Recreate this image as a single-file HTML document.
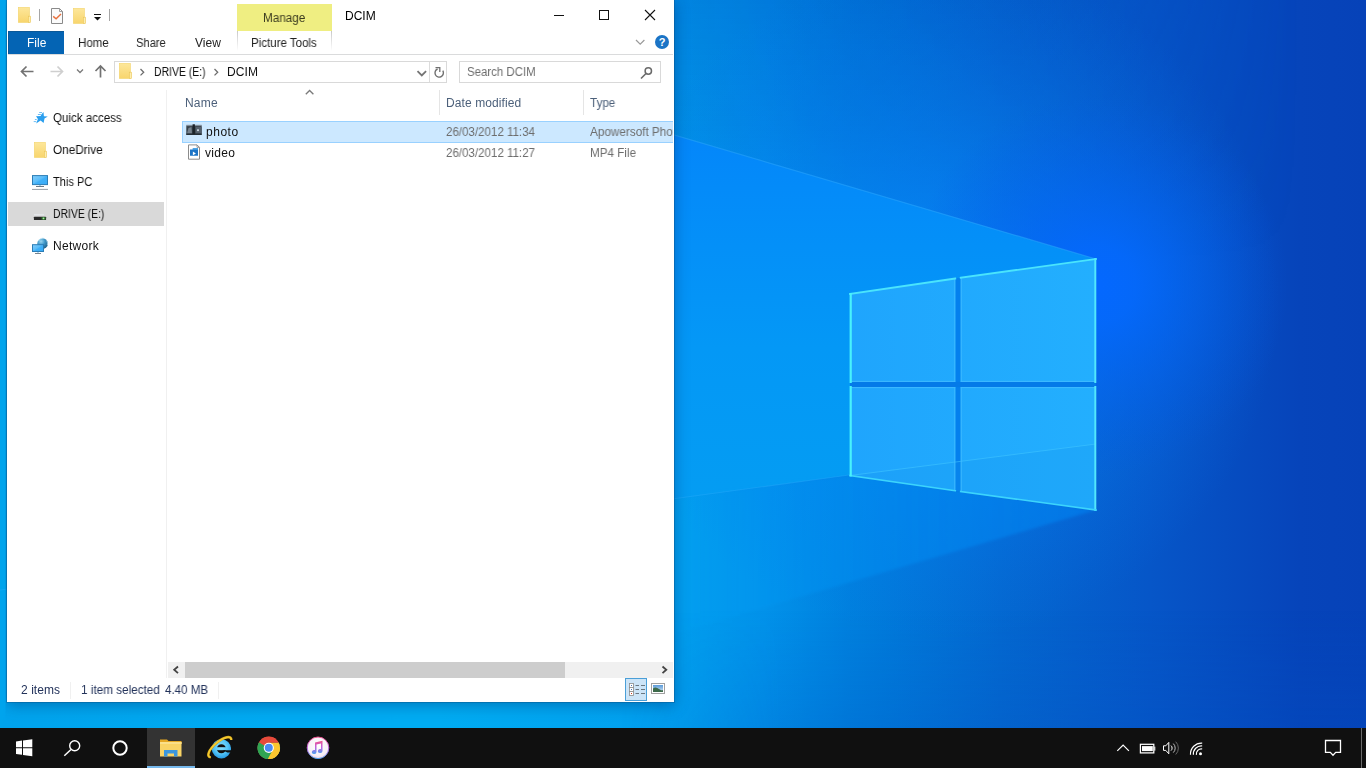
<!DOCTYPE html>
<html><head><meta charset="utf-8"><title>DCIM</title>
<style>
*{box-sizing:border-box;margin:0;padding:0}
html,body{width:1366px;height:768px;overflow:hidden;background:#0a5fd0;font-family:"Liberation Sans",sans-serif;font-size:12px;color:#000}
.a{position:absolute}
#wall{position:absolute;left:0;top:0;width:1366px;height:768px}
#win{position:absolute;left:7px;top:0;width:667px;height:702px;background:#fff;box-shadow:0 0 0 1px rgba(10,70,120,.32),0 3px 14px rgba(0,45,105,.42);clip-path:inset(0 -40px -40px -1.500px)}
#taskbar{position:absolute;left:0;top:728px;width:1366px;height:40px;background:#101010}
.t{position:absolute;white-space:nowrap;font-size:12px;will-change:transform}
svg{position:absolute;overflow:visible}
</style></head><body>
<svg id="wall" viewBox="0 0 1366 768">
<defs>
<linearGradient id="bg" x1="0" y1="0" x2="1366" y2="0" gradientUnits="userSpaceOnUse">
<stop offset="0" stop-color="#00a4ec"/><stop offset=".2" stop-color="#00acf2"/><stop offset=".32" stop-color="#00acf2"/><stop offset=".5" stop-color="#029eee"/><stop offset=".56" stop-color="#0292ea"/><stop offset=".622" stop-color="#0080de"/><stop offset=".732" stop-color="#0468d0"/><stop offset=".842" stop-color="#0656c8"/><stop offset=".952" stop-color="#0644ba"/><stop offset="1" stop-color="#0642b8"/>
</linearGradient>
<linearGradient id="vd" x1="0" y1="0" x2="0" y2="260" gradientUnits="userSpaceOnUse">
<stop offset="0" stop-color="#0030b0" stop-opacity=".24"/><stop offset=".5" stop-color="#0030b0" stop-opacity=".14"/><stop offset="1" stop-color="#0030b0" stop-opacity="0"/>
</linearGradient>
<linearGradient id="hm" x1="600" y1="0" x2="1300" y2="0" gradientUnits="userSpaceOnUse">
<stop offset="0" stop-color="#fff" stop-opacity="0"/><stop offset=".1" stop-color="#fff"/><stop offset=".6" stop-color="#fff" stop-opacity=".8"/><stop offset="1" stop-color="#fff" stop-opacity="0"/>
</linearGradient>
<mask id="mk"><rect width="1366" height="768" fill="url(#hm)"/></mask>
<linearGradient id="beam" x1="0" y1="130" x2="0" y2="520" gradientUnits="userSpaceOnUse">
<stop offset="0" stop-color="#0486fa"/><stop offset=".3" stop-color="#0490f8"/><stop offset=".56" stop-color="#0498f6"/><stop offset="1" stop-color="#049df2"/>
</linearGradient>
<linearGradient id="floor" x1="674" y1="0" x2="1096" y2="0" gradientUnits="userSpaceOnUse">
<stop offset="0" stop-color="#08a0f6" stop-opacity=".1"/><stop offset=".4" stop-color="#0a94f6" stop-opacity=".4"/><stop offset="1" stop-color="#0a84f4" stop-opacity=".55"/>
</linearGradient>
<radialGradient id="glow" cx="1098" cy="285" r="190" gradientUnits="userSpaceOnUse">
<stop offset="0" stop-color="#0468ff" stop-opacity="1"/><stop offset=".2" stop-color="#0468fc" stop-opacity=".9"/><stop offset=".55" stop-color="#0462f2" stop-opacity=".5"/><stop offset="1" stop-color="#0458e4" stop-opacity="0"/>
</radialGradient>
<radialGradient id="glow2" cx="940" cy="300" r="340" gradientUnits="userSpaceOnUse">
<stop offset="0" stop-color="#088aff" stop-opacity=".85"/><stop offset=".45" stop-color="#0884fa" stop-opacity=".45"/><stop offset="1" stop-color="#0878f0" stop-opacity="0"/>
</radialGradient>
<linearGradient id="pane" x1="849" y1="0" x2="1096" y2="0" gradientUnits="userSpaceOnUse">
<stop offset="0" stop-color="#1fa5fd"/><stop offset="1" stop-color="#23affe"/>
</linearGradient>
<linearGradient id="edge" x1="849" y1="0" x2="1096" y2="0" gradientUnits="userSpaceOnUse">
<stop offset="0" stop-color="#3fe6f2"/><stop offset="1" stop-color="#5fe0f6"/>
</linearGradient>
<linearGradient id="bd" x1="0" y1="610" x2="0" y2="728" gradientUnits="userSpaceOnUse"><stop offset="0" stop-color="#0050c0" stop-opacity="0"/><stop offset="1" stop-color="#0050c0" stop-opacity=".2"/></linearGradient>
<linearGradient id="hm2" x1="620" y1="0" x2="780" y2="0" gradientUnits="userSpaceOnUse"><stop offset="0" stop-color="#fff" stop-opacity="0"/><stop offset="1" stop-color="#fff"/></linearGradient>
<mask id="mk2"><rect width="1366" height="768" fill="url(#hm2)"/></mask>
<filter id="bl" x="-5%" y="-5%" width="110%" height="110%"><feGaussianBlur stdDeviation="1.6"/></filter>
</defs>
<rect width="1366" height="768" fill="url(#bg)"/>
<rect width="1366" height="260" fill="url(#vd)" mask="url(#mk)"/>
<rect x="0" y="610" width="1366" height="118" fill="url(#bd)" mask="url(#mk2)"/>
<circle cx="940" cy="300" r="340" fill="url(#glow2)"/>
<circle cx="1098" cy="285" r="190" fill="url(#glow)"/>
<polygon points="660,130.900 1096,259 1096,510 849,475 660,500.600" fill="url(#beam)"/>
<g filter="url(#bl)"><polygon points="0,590 849,475 1096,510 0,832" fill="url(#floor)"/></g>
<polyline points="0,-63 1096,259" fill="none" stroke="#2aa4fc" stroke-width="1.2" opacity=".55"/>
<polyline points="0,590 849,475" fill="none" stroke="#2aacfc" stroke-width="1.2" opacity=".4"/>
<rect x="955.300" y="278" width="5.400" height="213" fill="#0480ee"/>
<rect x="850" y="381.900" width="246" height="5.200" fill="#047ae8"/>
<g fill="url(#pane)">
<polygon points="850,294 955.300,278.500 955.300,381.900 850,381.900"/>
<polygon points="960.700,277.700 1096,259 1096,381.900 960.700,381.900"/>
<polygon points="850,387.100 955.300,387.100 955.300,490.700 850,475.500"/>
<polygon points="960.700,387.100 1096,387.100 1096,510 960.700,491.500"/>
</g>
<polygon points="850,475.500 1096,444 1096,510" fill="#1090ee" opacity=".22"/>
<polyline points="850,475.500 1096,444" fill="none" stroke="#40c4ff" stroke-width="1" opacity=".6"/>
<g fill="none" stroke="#46beff" stroke-width="1" opacity=".8">
<path d="M954.800 278.500V381.900M954.800 387.100V490.600M961.200 277.700V381.900M961.200 387.100V491.500"/>
<path d="M850 381.400H955.300M960.700 381.400H1096M850 387.600H955.300M960.700 387.600H1096"/>
</g>
<g fill="none" stroke-linecap="square">
<path d="M850 294L955.300 278.500M960.700 277.700L1096 259" stroke="#4ae4fc" stroke-width="1.800"/>
<path d="M1095.300 259V381.900M1095.300 387.100V510" stroke="#52e6fc" stroke-width="2"/>
<path d="M850 475.500L955.300 490.700M960.700 491.500L1096 510" stroke="#3cd4fc" stroke-width="1.600"/>
<path d="M850.700 294V381.900M850.700 387.100V475.500" stroke="#48f2fc" stroke-width="2.200"/>
</g>
</svg>

<div id="win">
<!-- title bar / QAT -->
<svg class="a" style="left:0;top:0" width="667" height="60" viewBox="7 0 667 60">
<defs>
<linearGradient id="fg" x1="0" y1="0" x2="0" y2="1"><stop offset="0" stop-color="#fde79b"/><stop offset="1" stop-color="#f8d56d"/></linearGradient>
<g id="fold"><rect x="0.25" y="0.25" width="11.3" height="15.3" fill="url(#fg)" stroke="#f1d267" stroke-width="0.5"/><rect x="10.4" y="9.2" width="2.2" height="6.35" fill="#fdeeb0" stroke="#ecc556" stroke-width="0.6"/></g>
</defs>
<use href="#fold" x="18" y="7"/>
<rect x="39" y="9" width="1" height="12" fill="#a6a6a6"/>
<path d="M51.5 8.5h8l3 3v12h-11z" fill="#fbfbfb" stroke="#8a8a8a" stroke-width="1"/>
<path d="M59.5 8.5v3h3" fill="none" stroke="#8a8a8a" stroke-width=".8"/>
<path d="M53.2 16.4L56.1 18.8 61 14.1" fill="none" stroke="#e8703c" stroke-width="1.4"/>
<use href="#fold" x="73" y="8"/>
<rect x="94" y="14" width="7" height="1" fill="#111"/>
<path d="M94 17h7l-3.5 3.5z" fill="#111"/>
<rect x="109" y="9" width="1" height="12" fill="#a6a6a6"/>
<!-- Manage tab -->
<rect x="237" y="4" width="95" height="27" fill="#efee82"/>
<!-- Picture tools tab side borders -->
<linearGradient id="pb" x1="0" y1="0" x2="0" y2="1"><stop offset="0" stop-color="#c8c8c8"/><stop offset="1" stop-color="#c8c8c8" stop-opacity="0"/></linearGradient>
<rect x="237" y="31" width="1" height="20" fill="url(#pb)"/>
<rect x="331" y="31" width="1" height="20" fill="url(#pb)"/>
<!-- window controls -->
<rect x="554" y="15" width="10" height="1" fill="#111"/>
<rect x="599.5" y="10.5" width="9" height="9" fill="none" stroke="#111" stroke-width="1"/>
<path d="M645 10l10 10M655 10l-10 10" stroke="#111" stroke-width="1.1" fill="none"/>
<!-- File tab -->
<rect x="8" y="31" width="56" height="23" fill="#0464b4"/><path d="M8.5 54V31.500H64" fill="none" stroke="#0a5898" stroke-width="1"/>
<!-- ribbon bottom line -->
<rect x="8" y="54" width="665" height="1" fill="#dadbdc"/>
<!-- chevron + help -->
<path d="M636 40l4.2 4.2 4.2-4.2" fill="none" stroke="#9a9a9a" stroke-width="1.2"/>
<circle cx="662" cy="42" r="7" fill="#1b74c6"/>
<text x="662" y="46.2" font-family="Liberation Sans" font-weight="bold" font-size="11" fill="#fff" text-anchor="middle">?</text>
</svg>
<!-- address row -->
<svg class="a" style="left:0;top:56px" width="667" height="32" viewBox="7 56 667 32">
<g fill="none" stroke="#727272" stroke-width="1.7">
<path d="M33.5 71.500h-12M26.5 66.500l-5 5 5 5"/>
<path d="M100.500 77.500v-11M95.500 71.000l5-5 5 5"/>
</g>
<g fill="none" stroke="#cfcfcf" stroke-width="1.7"><path d="M50.5 71.5h12M57.5 66.5l5 5-5 5"/></g>
<path d="M77 69.500l3 3 3-3" fill="none" stroke="#7a7a7a" stroke-width="1.3"/>
<rect x="114.500" y="61.500" width="332" height="21" fill="#fff" stroke="#d9d9d9"/>
<use href="#fold" x="119" y="63"/>
<path d="M140.500 69l3.200 3.200-3.200 3.200M214.500 69l3.200 3.200-3.200 3.200" fill="none" stroke="#6e6e6e" stroke-width="1.3"/>
<path d="M417.5 71.2l4.3 4.2 4.3-4.2" fill="none" stroke="#747474" stroke-width="1.8"/>
<rect x="429" y="62" width="1" height="20" fill="#dcdcdc"/>
<path d="M442.800 70.700A4.200 4.200 0 1 1 437.600 69" fill="none" stroke="#707070" stroke-width="1.400"/>
<path d="M435.500 67.700H439.800V71.900" fill="none" stroke="#707070" stroke-width="1.300"/>
<rect x="459.500" y="61.500" width="201" height="21" fill="#fff" stroke="#d9d9d9"/>
<circle cx="648.300" cy="71" r="3.200" fill="none" stroke="#6a6a6a" stroke-width="1.5"/>
<path d="M646 73.500l-5 5" stroke="#6a6a6a" stroke-width="1.6" fill="none"/>
</svg>
<!-- nav pane -->
<div class="a" style="left:1px;top:202px;width:156px;height:24px;background:#d9d9d9"></div>
<div class="a" style="left:159px;top:90px;width:1px;height:588px;background:#f0f0f0"></div>
<svg class="a" style="left:0;top:100px" width="170" height="170" viewBox="7 100 170 170">
<!-- quick access star -->
<path d="M43.5 112L43.9 116.300 47.800 116.450 44.500 118.600 43.600 123.050 40.600 120.600 36.150 123.500 37.900 118.900 36 116.300 40.600 116 41.500 114.300z" fill="#2b9fee"/>
<path d="M39.200 112.500h2.800M37.900 114.500h3M34.900 119.500h1.800M33.700 121.600h2.600" stroke="#4aaef2" stroke-width=".8" fill="none"/>
<!-- onedrive folder -->
<use href="#fold" x="34" y="142"/>
<!-- this pc -->
<defs><linearGradient id="scr" x1="0" y1="0" x2="1" y2="1"><stop offset="0" stop-color="#86cffb"/><stop offset=".45" stop-color="#5cbdf9"/><stop offset=".55" stop-color="#3fb0f8"/><stop offset="1" stop-color="#3aaaf6"/></linearGradient>
<radialGradient id="glb" cx=".35" cy=".3" r=".8"><stop offset="0" stop-color="#9ad6f0"/><stop offset=".45" stop-color="#3f97c8"/><stop offset="1" stop-color="#1f5a80"/></radialGradient></defs>
<rect x="32.500" y="175.600" width="15" height="9" fill="url(#scr)" stroke="#2b7db6" stroke-width="1"/>
<rect x="39" y="185" width="2" height="1" fill="#9fd0ee"/>
<rect x="36" y="186.100" width="8" height=".9" fill="#5a6a78"/>
<rect x="32" y="188.900" width="16" height="1" fill="#98a0a8"/>
<!-- drive -->
<rect x="34" y="214" width="10" height="1.500" fill="#e6e9ec" opacity=".8"/>
<rect x="33.900" y="216.700" width="12.200" height="3.400" rx=".6" fill="#2a2a2a"/>
<rect x="41.500" y="217" width="4" height="2.800" fill="#2f7a2f" opacity=".8"/>
<circle cx="43.500" cy="218.400" r=".9" fill="#a8f0a0"/>
<!-- network -->
<circle cx="42.600" cy="243.500" r="5.300" fill="url(#glb)"/>
<path d="M38.500 241c1-2 3-3 5-3M46.500 240.500c1 1.500 1.300 3 .8 4.500" stroke="#c8ecfa" stroke-width=".9" fill="none" opacity=".8"/>
<rect x="32.500" y="244.700" width="11" height="6.800" fill="url(#scr)" stroke="#2b7db6" stroke-width="1"/>
<rect x="37.200" y="252" width="1.600" height="1" fill="#9fd0ee"/>
<rect x="35" y="253.100" width="6" height=".9" fill="#6a7884"/>
</svg>
<!-- header -->
<div class="a" style="left:432px;top:90px;width:1px;height:25px;background:#e5e5e5"></div>
<div class="a" style="left:576px;top:90px;width:1px;height:25px;background:#e5e5e5"></div>
<svg class="a" style="left:298px;top:89px" width="10" height="7" viewBox="305 89 10 7"><path d="M305.800 94.300l3.800-3.800 3.800 3.800" fill="none" stroke="#7a7a7a" stroke-width="1.300"/></svg>
<!-- rows -->
<div class="a" id="clip" style="left:160px;top:90px;width:506px;height:572px;overflow:hidden">
<div class="a" style="left:15px;top:31px;width:520px;height:22px;background:#cce8ff;border:1px solid #99d1ff"></div>
<div class="a" style="left:-160px;top:-90px;width:667px;height:702px">
<span class="t" id="t_ty1" style="left:582.70px;top:124.00px;color:#6d6d6d;font-size:12px;line-height:16px;transform:scaleX(0.978);transform-origin:0 0;">Apowersoft Photo Viewer</span>
</div>
</div>
<svg class="a" style="left:175px;top:120px" width="40" height="45" viewBox="182 120 40 45">
<defs><linearGradient id="ph" x1="0" y1="0" x2="1" y2="0"><stop offset="0" stop-color="#2a2f34"/><stop offset=".35" stop-color="#59626a"/><stop offset=".5" stop-color="#30363c"/><stop offset=".75" stop-color="#6a747c"/><stop offset="1" stop-color="#3a4046"/></linearGradient></defs>
<filter id="pbl" x="-10%" y="-20%" width="120%" height="140%"><feGaussianBlur stdDeviation="0.55"/></filter>
<g filter="url(#pbl)">
<rect x="186.3" y="125.4" width="15.4" height="9.4" fill="#36404a"/>
<rect x="186.3" y="124.6" width="15.4" height="1.6" fill="#8c98a4" opacity=".55"/>
<path d="M187 133.500l1.500-5.500 3-1 .5 6.500z" fill="#76828d"/>
<rect x="192.600" y="124.300" width="2.300" height="10" fill="#1d242a"/>
<rect x="195.600" y="127" width="6" height="6.500" fill="#55616c"/>
<rect x="197" y="129.300" width="2" height="1.800" fill="#c2ced8"/>
<rect x="186.300" y="133.600" width="15.400" height="1.300" fill="#222a31"/>
</g>
<path d="M188.500 144.900h8.500l2.500 2.500v11.800h-11z" fill="#fff" stroke="#8c8c8c" stroke-width="1"/>
<path d="M197 144.900v2.500h2.500" fill="none" stroke="#8c8c8c" stroke-width=".8"/>
<path d="M190 149.500h2.800v-1.200h5.200v7.500h-8z" fill="#1c74c6"/>
<rect x="192.800" y="148.300" width="5.200" height="1.400" fill="#4aa8ec"/>
<path d="M192.900 151.500l3 1.900-3 1.900z" fill="#fff"/>
</svg>
<!-- scrollbar -->
<div class="a" style="left:161px;top:662px;width:505px;height:16px;background:#f0f0f0"></div>
<div class="a" style="left:178px;top:662px;width:380px;height:16px;background:#cdcdcd"></div>
<svg class="a" style="left:161px;top:662px" width="505" height="16" viewBox="168 662 505 16">
<path d="M178 666.500l-3.800 3.300 3.800 3.300" fill="none" stroke="#444" stroke-width="1.800"/>
<path d="M662.500 666.500l3.800 3.300-3.800 3.300" fill="none" stroke="#444" stroke-width="1.800"/>
</svg>
<!-- status bar -->
<div class="a" style="left:63px;top:682px;width:1px;height:17px;background:#f0f0f0"></div>
<div class="a" style="left:211px;top:682px;width:1px;height:17px;background:#f0f0f0"></div>
<div class="a" style="left:618px;top:678px;width:22px;height:23px;background:#cce4f7;border:1px solid #4a9fd8"></div>
<svg class="a" style="left:618px;top:678px" width="49" height="24" viewBox="625 678 49 24">
<g fill="#fff" stroke="#8a8a8a" stroke-width=".8"><rect x="629.500" y="683.500" width="4" height="4"/><rect x="629.500" y="687.500" width="4" height="4"/><rect x="629.500" y="691.500" width="4" height="4"/></g>
<rect x="631" y="685" width="1" height="1" fill="#4a7ab8"/><rect x="631" y="689" width="1" height="1" fill="#4a7ab8"/><rect x="631" y="693" width="1" height="1" fill="#d04020"/>
<g fill="#6a7680"><rect x="635.500" y="685" width="3.500" height="1"/><rect x="641" y="685" width="4" height="1"/><rect x="635.500" y="689" width="3.500" height="1"/><rect x="641" y="689" width="4" height="1"/><rect x="635.500" y="693" width="3.500" height="1"/><rect x="641" y="693" width="4" height="1"/></g>
<rect x="651.500" y="683.500" width="13" height="10" fill="#fff" stroke="#a0a0a0" stroke-width="1"/>
<linearGradient id="sky" x1="0" y1="0" x2="0" y2="1"><stop offset="0" stop-color="#5a9ad8"/><stop offset="1" stop-color="#cfe4f4"/></linearGradient>
<rect x="653" y="685" width="10" height="7" fill="url(#sky)"/>
<path d="M653 692v-3.500c2-1.500 4-1 6 .5s3 1.500 4 1v2z" fill="#3d6a4a"/>
</svg>
<span class="t" id="t_manage" style="left:255.80px;top:10.00px;color:#3b3b20;font-size:12px;line-height:16px;transform:scaleX(0.9752);transform-origin:0 0;">Manage</span>
<span class="t" id="t_title" style="left:337.70px;top:8.00px;color:#000;font-size:12px;line-height:16px;transform:scaleX(0.9977);transform-origin:0 0;">DCIM</span>
<span class="t" id="t_file" style="left:19.50px;top:35.00px;color:#fff;font-size:12px;line-height:16px;letter-spacing:0.014px;">File</span>
<span class="t" id="t_home" style="left:70.60px;top:35.00px;color:#222;font-size:12px;line-height:16px;transform:scaleX(0.9620);transform-origin:0 0;">Home</span>
<span class="t" id="t_share" style="left:129.40px;top:35.00px;color:#222;font-size:12px;line-height:16px;transform:scaleX(0.9303);transform-origin:0 0;">Share</span>
<span class="t" id="t_view" style="left:187.60px;top:35.00px;color:#222;font-size:12px;line-height:16px;letter-spacing:0.051px;">View</span>
<span class="t" id="t_pt" style="left:243.60px;top:35.00px;color:#222;font-size:12px;line-height:16px;transform:scaleX(0.9593);transform-origin:0 0;">Picture Tools</span>
<span class="t" id="t_drive" style="left:146.60px;top:64.00px;color:#111;font-size:12px;line-height:16px;transform:scaleX(0.8695);transform-origin:0 0;">DRIVE (E:)</span>
<span class="t" id="t_dcim" style="left:220.40px;top:64.00px;color:#111;font-size:12px;line-height:16px;letter-spacing:0.107px;">DCIM</span>
<span class="t" id="t_search" style="left:460.40px;top:64.00px;color:#6d6d6d;font-size:12px;line-height:16px;transform:scaleX(0.9538);transform-origin:0 0;">Search DCIM</span>
<span class="t" id="t_qa" style="left:45.95px;top:110.00px;color:#111;font-size:12px;line-height:16px;transform:scaleX(0.9634);transform-origin:0 0;">Quick access</span>
<span class="t" id="t_od" style="left:45.95px;top:142.00px;color:#111;font-size:12px;line-height:16px;transform:scaleX(0.9815);transform-origin:0 0;">OneDrive</span>
<span class="t" id="t_pc" style="left:46.20px;top:174.00px;color:#111;font-size:12px;line-height:16px;transform:scaleX(0.9206);transform-origin:0 0;">This PC</span>
<span class="t" id="t_dr" style="left:45.60px;top:206.00px;color:#111;font-size:12px;line-height:16px;transform:scaleX(0.8661);transform-origin:0 0;">DRIVE (E:)</span>
<span class="t" id="t_nw" style="left:45.70px;top:238.00px;color:#111;font-size:12px;line-height:16px;letter-spacing:0.283px;">Network</span>
<span class="t" id="t_name" style="left:178.10px;top:95.00px;color:#4c607a;font-size:12px;line-height:16px;letter-spacing:0.196px;">Name</span>
<span class="t" id="t_date" style="left:438.90px;top:95.00px;color:#4c607a;font-size:12px;line-height:16px;letter-spacing:0.096px;">Date modified</span>
<span class="t" id="t_type" style="left:582.70px;top:95.00px;color:#4c607a;font-size:12px;line-height:16px;transform:scaleX(0.9725);transform-origin:0 0;">Type</span>
<span class="t" id="t_photo" style="left:198.70px;top:124.00px;color:#111;font-size:12px;line-height:16px;letter-spacing:0.514px;">photo</span>
<span class="t" id="t_video" style="left:198.30px;top:145.00px;color:#111;font-size:12px;line-height:16px;letter-spacing:0.282px;">video</span>
<span class="t" id="t_d1" style="left:438.70px;top:124.00px;color:#6d6d6d;font-size:12px;line-height:16px;transform:scaleX(0.9618);transform-origin:0 0;">26/03/2012 11:34</span>
<span class="t" id="t_d2" style="left:438.70px;top:145.00px;color:#6d6d6d;font-size:12px;line-height:16px;transform:scaleX(0.9618);transform-origin:0 0;">26/03/2012 11:27</span>
<span class="t" id="t_ty2" style="left:582.70px;top:145.00px;color:#6d6d6d;font-size:12px;line-height:16px;transform:scaleX(0.9716);transform-origin:0 0;">MP4 File</span>
<span class="t" id="t_items" style="left:14.40px;top:682.00px;color:#22325a;font-size:12px;line-height:16px;letter-spacing:0.059px;">2 items</span>
<span class="t" id="t_sel" style="left:73.90px;top:682.00px;color:#22325a;font-size:12px;line-height:16px;transform:scaleX(0.9775);transform-origin:0 0;">1 item selected</span>
<span class="t" id="t_size" style="left:158.10px;top:682.00px;color:#22325a;font-size:12px;line-height:16px;transform:scaleX(0.9619);transform-origin:0 0;">4.40 MB</span>

</div>
<div id="taskbar">
<div class="a" style="left:147px;top:0;width:48px;height:40px;background:#333"></div>
<div class="a" style="left:147px;top:38px;width:48px;height:2px;background:#76b9ed"></div>
<svg class="a" style="left:0;top:0" width="1366" height="40" viewBox="0 728 1366 40">
<!-- start -->
<g fill="#fff">
<path d="M16 741.500l6-.9v6.600h-6z"/><path d="M23 740.500l9.300-1.300v8h-9.300z"/>
<path d="M16 748.200h6v6.600l-6-.9z"/><path d="M23 748.200h9.300v8l-9.300-1.300z"/>
</g>
<!-- search -->
<circle cx="74.700" cy="745.800" r="5" fill="none" stroke="#fff" stroke-width="1.400"/>
<path d="M71 749.500l-6.700 6.300" stroke="#fff" stroke-width="1.500" fill="none"/>
<!-- cortana -->
<circle cx="120" cy="748" r="6.700" fill="none" stroke="#fff" stroke-width="2"/>
<!-- explorer -->
<path d="M160 739.500h7l1.500 1.500h13v3h-21.500z" fill="#e5a823"/>
<rect x="160" y="742" width="21.500" height="14.500" fill="#f9d466"/>
<rect x="160" y="742" width="21.500" height="2" fill="#fbe08a"/>
<path d="M164 756.500v-6.500h13.500v6.500h-3.500v-3h-6.500v3z" fill="#3b96dd"/>
<!-- IE -->
<g>
<defs><radialGradient id="ieg" cx="221" cy="747" r="11" gradientUnits="userSpaceOnUse"><stop offset="0" stop-color="#8adffc"/><stop offset=".6" stop-color="#55c6f7"/><stop offset="1" stop-color="#2a9fe6"/></radialGradient></defs>
<circle cx="221.400" cy="748.800" r="7.100" fill="none" stroke="url(#ieg)" stroke-width="5.100"/>
<rect x="214" y="747.200" width="16.500" height="3" fill="url(#ieg)"/>
<path d="M222.500 750.200h9.500v2.300h-4.600z" fill="#101010"/>
<path d="M231.300 740A14.300 5.400 -40 1 0 210.700 757.300" fill="none" stroke="#c89a18" stroke-width="2.600"/>
<path d="M231.300 740A14.300 5.400 -40 1 0 210.700 757.300" fill="none" stroke="#f4ca30" stroke-width="1.600"/>
</g>
<!-- chrome -->
<g>
<circle cx="268.800" cy="747.800" r="11.200" fill="#e64a3b"/>
<path d="M268.800 747.800l-9.700-5.600a11.200 11.200 0 0 0 4.100 15.300z" fill="#2fa452"/>
<path d="M268.800 747.800L263.200 757.500a11.200 11.200 0 0 0 5.600 1.500 11.200 11.200 0 0 0 9.700-16.800H268.800z" fill="#2fa452"/>
<path d="M268.800 747.800h11.200a11.200 11.200 0 0 1-11.200 11.200 11.200 11.200 0 0 1-1-.05L271.500 752z" fill="#fbc62f"/>
<path d="M268.800 742.700h9.900a11.200 11.200 0 0 1-6.200 15.700l-3.700 .6 4.400-8.600z" fill="#fbc62f"/>
<path d="M259.100 742.200a11.200 11.200 0 0 1 19.600 .5H268.800a5.100 5.100 0 0 0-4.600 2.900z" fill="#e64a3b"/>
<path d="M259.100 742.200l5.100 8.300 a5.100 5.100 0 0 0 7.200 1.800l-4.600 6.700a11.200 11.200 0 0 1-7.700-16.800z" fill="#2fa452"/>
<circle cx="268.800" cy="747.800" r="5.100" fill="#fff"/>
<circle cx="268.800" cy="747.800" r="4" fill="#4a8af4"/>
</g>
<!-- itunes -->
<defs><linearGradient id="it" x1="0" y1="0" x2="0" y2="1"><stop offset="0" stop-color="#f0508c"/><stop offset=".5" stop-color="#c060e0"/><stop offset="1" stop-color="#4aa0f0"/></linearGradient>
<radialGradient id="itb" cx=".5" cy=".4" r=".6"><stop offset="0" stop-color="#fff"/><stop offset=".8" stop-color="#f6eef6"/><stop offset="1" stop-color="#e6cfe6"/></radialGradient></defs>
<circle cx="318" cy="747.800" r="10.800" fill="url(#itb)" stroke="url(#it)" stroke-width="1"/>
<path d="M315 742.500l7.500-1.800v10.300a2.300 2 0 1 1-1.500-1.900v-5.600l-4.500 1.100v7.400a2.300 2 0 1 1-1.500-1.900z" fill="url(#it)"/>
<!-- tray -->
<path d="M1117.300 750.800l5.800-5.800 5.800 5.800" fill="none" stroke="#fff" stroke-width="1.200"/>
<rect x="1140.400" y="744.300" width="13.400" height="8.600" fill="none" stroke="#fff" stroke-width="1.250"/>
<rect x="1154.300" y="746.600" width="1" height="4" fill="#fff"/>
<rect x="1142" y="746.100" width="10.800" height="5" fill="#fff"/>
<path d="M1163.500 745.800h2.300l3-3.400v11.400l-3-3.400h-2.300z" fill="none" stroke="#fff" stroke-width="1"/>
<path d="M1171 745.600a3.400 3.400 0 0 1 0 5" fill="none" stroke="#fff" stroke-width="1"/>
<path d="M1173.300 743.600a6.300 6.300 0 0 1 0 9" fill="none" stroke="#bbb" stroke-width="1"/>
<path d="M1175.700 741.700a9 9 0 0 1 0 12.800" fill="none" stroke="#666" stroke-width="1"/>
<circle cx="1200.500" cy="753.700" r="1.500" fill="#fff"/>
<g fill="none" stroke="#fff" stroke-width="1.200">
<path d="M1196.400 754.800a5 5 0 0 1 5.800-5.800"/>
<path d="M1193.400 754.800a8 8 0 0 1 8.800-8.800"/>
<path d="M1190.500 754.800a11 11 0 0 1 11.700-11.700"/>
</g>
<path d="M1325.500 740.500h15v11.900h-4.800l-2.700 2.800-2.700-2.800h-4.800z" fill="none" stroke="#fff" stroke-width="1.300"/>
<rect x="1361" y="728" width="1" height="40" fill="#6a6a6a"/>
</svg>

</div>
</body></html>
